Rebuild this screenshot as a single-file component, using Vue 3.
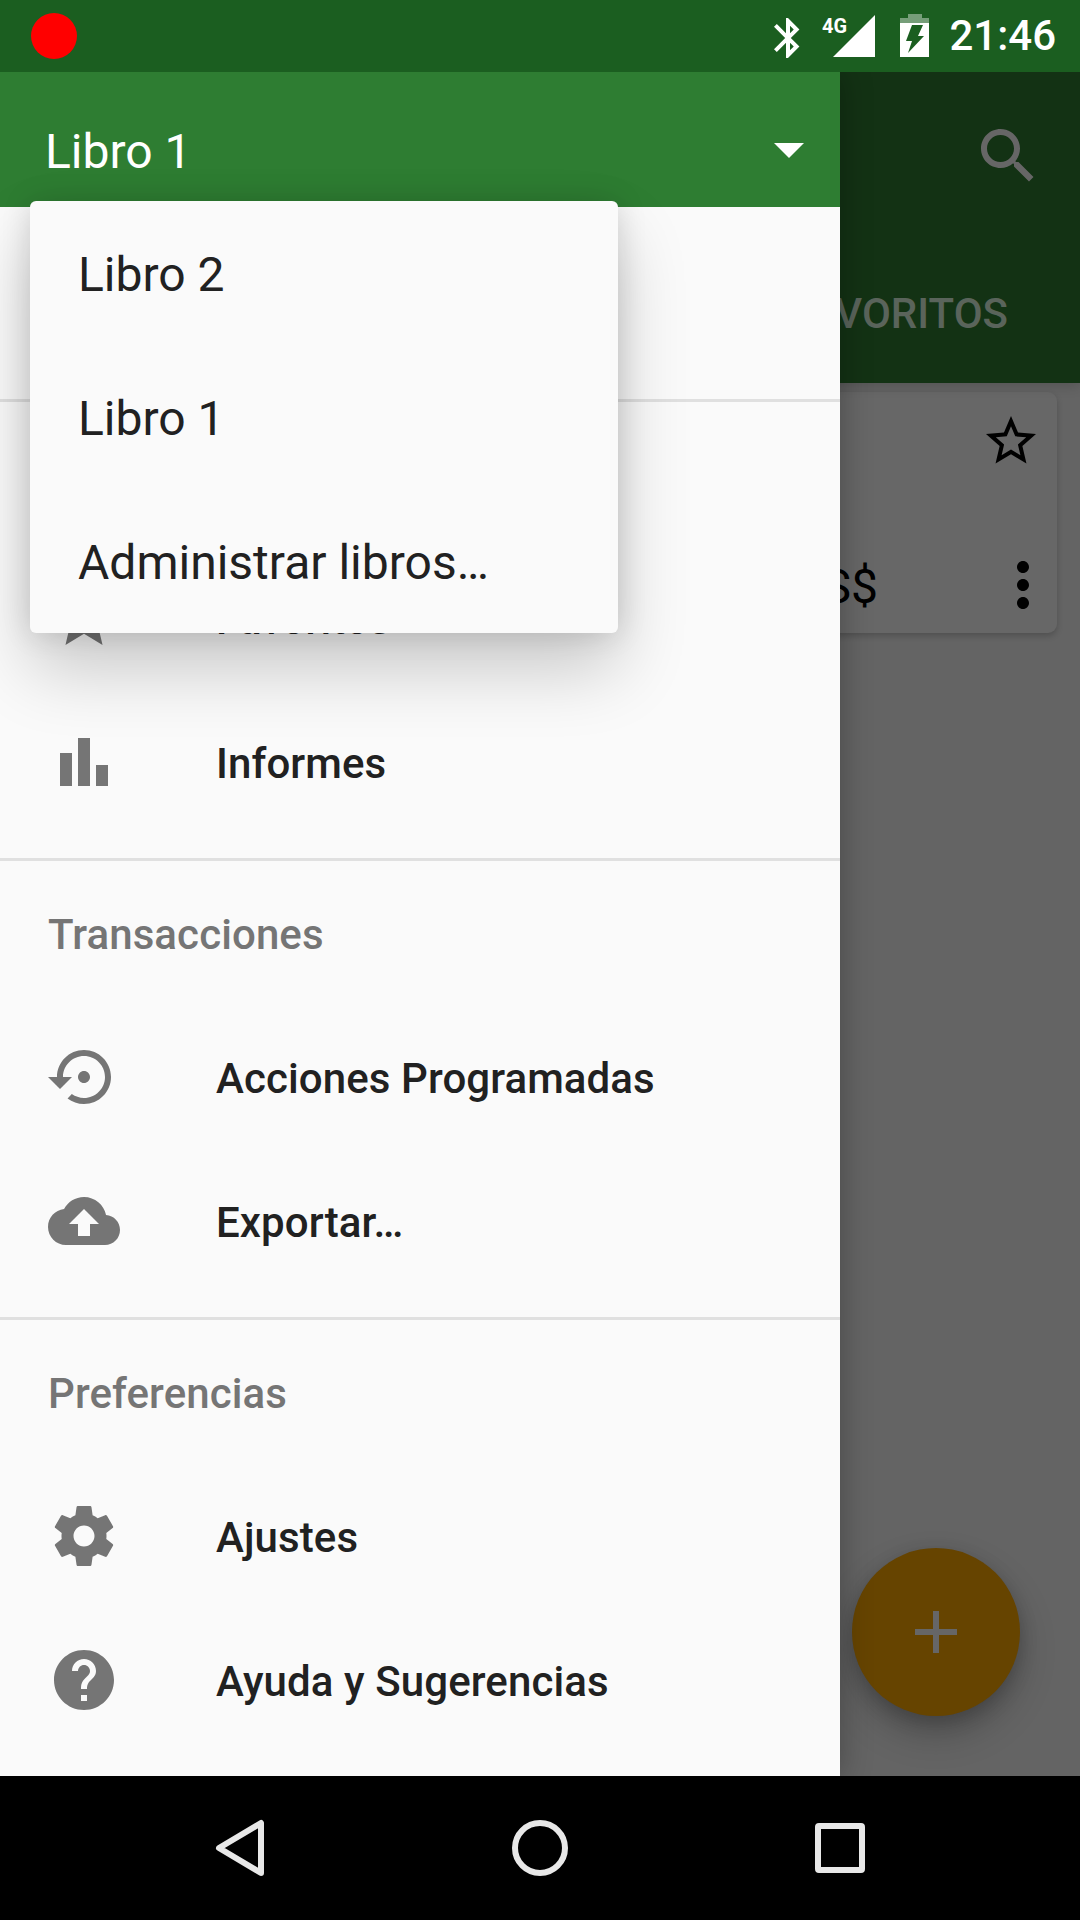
<script setup>
const icons = {
  star: 'M12 17.27L18.18 21l-1.64-7.03L22 9.24l-7.19-.61L12 2 9.19 8.63 2 9.24l5.46 4.73L5.82 21z',
  chart: 'M4 9h4v11H4zm12 4h4v7h-4zm-6-9h4v16h-4z',
  restore: 'M14 12c0-1.1-.9-2-2-2s-2 .9-2 2 .9 2 2 2 2-.9 2-2zm-2-9c-4.97 0-9 4.03-9 9H0l4 4 4-4H5c0-3.87 3.13-7 7-7s7 3.13 7 7-3.13 7-7 7c-1.51 0-2.91-.49-4.06-1.3l-1.42 1.44C8.04 20.3 9.94 21 12 21c4.97 0 9-4.03 9-9s-4.03-9-9-9z',
  upload: 'M19.35 10.04C18.67 6.59 15.64 4 12 4 9.11 4 6.6 5.64 5.35 8.04 2.34 8.36 0 10.91 0 14c0 3.31 2.69 6 6 6h13c2.76 0 5-2.24 5-5 0-2.64-2.05-4.78-4.65-4.96zM14 13v4h-4v-4H7l5-5 5 5h-3z',
  gear: 'M19.43 12.98c.04-.32.07-.64.07-.98s-.03-.66-.07-.98l2.11-1.65c.19-.15.24-.42.12-.64l-2-3.46c-.12-.22-.39-.3-.61-.22l-2.49 1c-.52-.4-1.08-.73-1.69-.98l-.38-2.65C14.46 2.18 14.25 2 14 2h-4c-.25 0-.46.18-.49.42l-.38 2.65c-.61.25-1.17.59-1.69.98l-2.49-1c-.23-.09-.49 0-.61.22l-2 3.46c-.13.22-.07.49.12.64l2.11 1.65c-.04.32-.07.65-.07.98s.03.66.07.98l-2.11 1.65c-.19.15-.24.42-.12.64l2 3.46c.12.22.39.3.61.22l2.49-1c.52.4 1.08.73 1.69.98l.38 2.65c.03.24.24.42.49.42h4c.25 0 .46-.18.49-.42l.38-2.65c.61-.25 1.17-.59 1.69-.98l2.49 1c.23.09.49 0 .61-.22l2-3.46c.12-.22.07-.49-.12-.64l-2.11-1.65zM12 15.5c-1.93 0-3.5-1.57-3.5-3.5s1.57-3.5 3.5-3.5 3.5 1.57 3.5 3.5-1.57 3.5-3.5 3.5z',
  help: 'M12 2C6.48 2 2 6.48 2 12s4.48 10 10 10 10-4.48 10-10S17.52 2 12 2zm1 17h-2v-2h2v2zm2.07-7.75l-.9.92C13.45 12.9 13 13.5 13 15h-2v-.5c0-1.1.45-2.1 1.17-2.83l1.24-1.26c.37-.36.59-.86.59-1.41 0-1.1-.9-2-2-2s-2 .9-2 2H8c0-2.21 1.79-4 4-4s4 1.79 4 4c0 .88-.36 1.68-.93 2.25z',
}

const sections = [
  { cover: true, items: [{ label: 'Favoritos', icon: icons.star }, { label: 'Informes', icon: icons.chart }] },
  { title: 'Transacciones', items: [{ label: 'Acciones Programadas', icon: icons.restore }, { label: 'Exportar…', icon: icons.upload }] },
  { title: 'Preferencias', items: [{ label: 'Ajustes', icon: icons.gear }, { label: 'Ayuda y Sugerencias', icon: icons.help }] },
]

const books = ['Libro 2', 'Libro 1', 'Administrar libros…']
</script>

<template>
  <div class="screen">
    <div class="status">
      <span class="rec"></span>
      <div class="status-right">
        <svg class="st bt" width="48" height="72" viewBox="0 0 48 72">
          <path transform="translate(0 14) scale(2)" d="M17.71 7.71L12 2h-1v7.59L6.41 5 5 6.41 10.59 12 5 17.59 6.41 19 11 14.41V22h1l5.71-5.71-4.3-4.29 4.3-4.29zM13 5.83l1.88 1.88L13 9.59V5.83zm1.88 10.46L13 18.17v-3.76l1.88 1.88z" />
        </svg>
        <svg class="st sig" width="53" height="72" viewBox="0 0 53 72">
          <polygon points="53,15 53,57 11,57" />
          <text x="0" y="33" textLength="25" lengthAdjust="spacingAndGlyphs" class="g4">4G</text>
        </svg>
        <svg class="st bat" width="29" height="72" viewBox="0 0 29 72">
          <path d="M8 14h14v4h7v5H0v-5h8z" opacity=".4" />
          <path d="M0 23h29v34H0z" />
          <polygon class="bolt" points="12,25 23,25 18,36 24,36 8,53 12,41 6,41" />
        </svg>
        <span class="time">21:46</span>
      </div>
    </div>

    <div class="main">
      <!-- app behind the scrim -->
      <div class="app">
        <div class="appbar">
          <div class="toolbar">
            <svg class="ico-72" viewBox="0 0 24 24"><path d="M15.5 14h-.79l-.28-.27C15.41 12.59 16 11.11 16 9.5 16 5.91 13.09 3 9.5 3S3 5.91 3 9.5 5.91 16 9.5 16c1.61 0 3.09-.59 4.23-1.57l.27.28v.79l5 4.99L20.49 19l-4.99-5zm-6 0C7.01 14 5 11.99 5 9.5S7.01 5 9.5 5 14 7.01 14 9.5 11.99 14 9.5 14z" /></svg>
          </div>
          <div class="tabs"><span class="tab">FAVORITOS</span></div>
        </div>
        <div class="card">
          <div class="card-top">
            <svg class="card-star" viewBox="0 0 24 24"><path d="M22 9.24l-7.19-.62L12 2 9.19 8.63 2 9.24l5.46 4.73L5.82 21 12 17.27 18.18 21l-1.63-7.03L22 9.24zM12 15.4l-3.76 2.27 1-4.28-3.32-2.88 4.38-.38L12 6.1l1.71 4.04 4.38.38-3.32 2.88 1 4.28L12 15.4z" /></svg>
          </div>
          <div class="card-bottom">
            <span class="amount">US$</span>
            <svg class="ico-72 dots" viewBox="0 0 24 24"><path d="M12 8c1.1 0 2-.9 2-2s-.9-2-2-2-2 .9-2 2 .9 2 2 2zm0 2c-1.1 0-2 .9-2 2s.9 2 2 2 2-.9 2-2-.9-2-2-2zm0 6c-1.1 0-2 .9-2 2s.9 2 2 2 2-.9 2-2-.9-2-2-2z" /></svg>
          </div>
        </div>
        <div class="fab"><span class="plus"></span></div>
      </div>

      <!-- drawer -->
      <aside class="drawer">
        <div class="drawer-head">
          <span class="book">Libro 1</span>
          <span class="caret"></span>
        </div>
        <div class="drawer-blank"></div>
        <section v-for="(s, i) in sections" :key="i" class="section" :class="{ covered: s.cover }">
          <div v-if="s.title" class="sec-title">{{ s.title }}</div>
          <div v-for="it in s.items" :key="it.label" class="row">
            <svg class="ico-72 row-ico" viewBox="0 0 24 24"><path :d="it.icon" /></svg>
            <span class="row-label">{{ it.label }}</span>
          </div>
        </section>
      </aside>

      <div class="popup">
        <div v-for="b in books" :key="b" class="popup-item">{{ b }}</div>
      </div>
    </div>

    <div class="nav">
      <svg width="60" height="68" viewBox="0 0 60 68"><path class="nav-stroke" d="M51 9v50L9 34z" /></svg>
      <svg width="60" height="68" viewBox="0 0 60 68"><circle class="nav-stroke" cx="30" cy="34" r="25" /></svg>
      <svg width="60" height="68" viewBox="0 0 60 68"><rect class="nav-stroke" x="8" y="12" width="44" height="44" rx="1" /></svg>
    </div>
  </div>
</template>

<style scoped>
.screen{width:1080px;height:1920px;display:flex;flex-direction:column;overflow:hidden;font-family:Roboto,"Liberation Sans",sans-serif;background:#000}

.status{height:72px;flex:none;background:#1b5e20;display:flex;align-items:center;padding-left:31px;padding-right:24px;position:relative;z-index:3}
.rec{width:46px;height:46px;border-radius:50%;background:#f00}
.status-right{margin-left:auto;display:flex;align-items:center}
.st{fill:#fff;display:block}
.sig{margin-left:10px}
.bat{margin-left:25px}
.g4{font:700 21px Roboto,sans-serif;fill:#fff}
.bolt{fill:#1b5e20}
.time{margin-left:20px;font-size:42px;font-weight:500;color:#fff;line-height:72px}

.main{flex:1;min-height:0;position:relative;background:#646464}
.app{height:100%;display:flex;flex-direction:column}
.appbar{height:311px;flex:none;background:#133214;display:flex;flex-direction:column;position:relative;box-shadow:0 3px 12px rgba(0,0,0,.16)}
.toolbar{height:168px;display:flex;justify-content:flex-end;align-items:center;padding:0 36px 0;box-sizing:border-box}
.ico-72{width:72px;height:72px;flex:none;display:block}
.toolbar .ico-72{fill:#666}
.tabs{flex:1;display:flex;justify-content:flex-end;padding-right:72px}
.tab{font-size:42px;font-weight:500;color:#5a645b;line-height:60px;margin-top:44px}

.card{margin:9px 23px 0 24px;height:241px;box-sizing:border-box;background:#676767;border-radius:9px;box-shadow:0 3px 6px rgba(0,0,0,.2);display:flex;flex-direction:column;justify-content:space-between}
.card-top{display:flex;justify-content:flex-end;padding:19px 16px 0 0}
.card-star{width:60px;height:60px;fill:#000}
.card-bottom{display:flex;justify-content:flex-end;align-items:center;padding-bottom:12px;margin-right:-2px}
.amount{font-size:48px;line-height:60px;color:#000;margin-right:109px;margin-top:3px}
.dots{fill:#000}

.fab{position:absolute;left:852px;top:1476px;width:168px;height:168px;border-radius:50%;background:#664400;box-shadow:0 18px 36px rgba(0,0,0,.22),0 6px 18px rgba(0,0,0,.18);display:flex;align-items:center;justify-content:center}
.plus{width:42px;height:6px;background:#666;position:relative}
.plus::after{content:"";position:absolute;left:18px;top:-18px;width:6px;height:42px;background:#666}

.drawer{position:absolute;left:0;top:0;bottom:0;width:840px;background:#fafafa;box-shadow:0 0 30px rgba(0,0,0,.3);overflow:hidden}
.drawer-head{height:135px;background:#2e7d32;display:flex;align-items:center;justify-content:space-between;padding:22px 36px 0 45px;box-sizing:border-box}
.book{font-size:48px;color:#fff;padding-top:2px}
.caret{width:0;height:0;border-left:15px solid transparent;border-right:15px solid transparent;border-top:15px solid #fff}
.drawer-blank{height:192px}
.section{border-top:3px solid #e0e0e0;padding-bottom:24px}
.section.covered{padding-top:144px}
.sec-title{height:144px;box-sizing:border-box;padding-top:3px;display:flex;align-items:center;padding-left:48px;font-size:42px;font-weight:500;color:#757575;letter-spacing:.1px}
.row{height:144px;display:flex;align-items:center;padding-left:48px}
.row-ico{fill:#757575}
.row-label{margin-left:96px;font-size:42px;font-weight:500;color:#212121;letter-spacing:.1px;position:relative;top:1px}

.popup{position:absolute;left:30px;top:129px;width:588px;background:#fafafa;border-radius:6px;box-shadow:0 36px 70px rgba(0,0,0,.2),0 0 30px rgba(0,0,0,.14)}
.popup-item{height:144px;box-sizing:border-box;padding-top:3px;display:flex;align-items:center;padding-left:48px;font-size:48px;color:#212121}

.nav{height:144px;flex:none;background:#000;display:flex;position:relative;z-index:3;align-items:center;justify-content:center;gap:240px}
.nav-stroke{fill:none;stroke:#e8e8e8;stroke-width:6;stroke-linejoin:round}
</style>
